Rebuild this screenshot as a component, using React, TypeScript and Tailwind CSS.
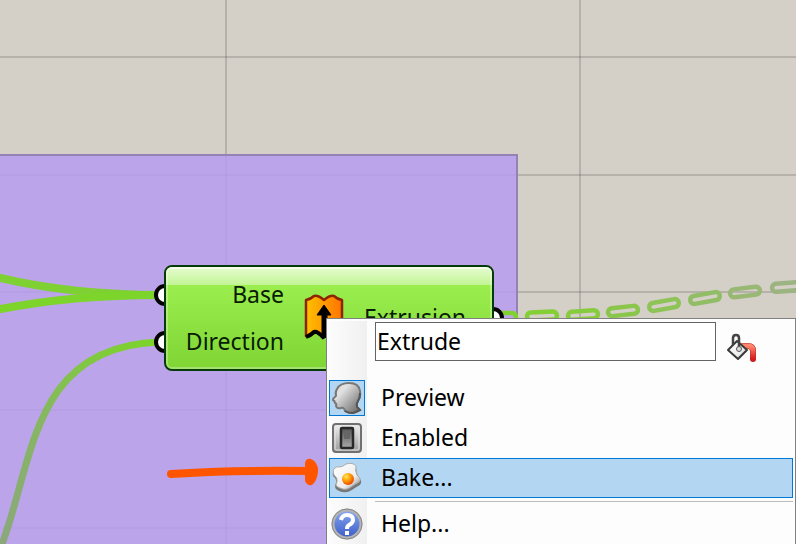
import type { ReactNode } from "react";

const links = [
  { x: 501, y: 317, angle: 0, color: "#80d22c" },
  { x: 542, y: 316, angle: -2, color: "#84cf35" },
  { x: 583, y: 315, angle: -4, color: "#87cc3f" },
  { x: 623, y: 311, angle: -6, color: "#8ac64a" },
  { x: 664, y: 305, angle: -10, color: "#8dc357" },
  { x: 705, y: 298, angle: -10, color: "#91be64" },
  { x: 745, y: 292, angle: -7, color: "#98b873" },
  { x: 787, y: 287, angle: -4, color: "#9cb482" },
];

function Grid() {
  return (
    <svg className="absolute inset-0 size-full" aria-hidden="true">
      <g fill="#000" fillOpacity="0.14">
        {[225, 579].map((x) => (
          <rect key={x} x={x} y="0" width="2" height="100%" />
        ))}
        {[56, 174, 291, 409, 527].map((y) => (
          <rect key={y} x="0" y={y} width="100%" height="2" />
        ))}
      </g>
    </svg>
  );
}

function Wires() {
  return (
    <svg className="absolute inset-0 size-full" fill="none" aria-hidden="true">
      <defs>
        <linearGradient id="wire" gradientUnits="userSpaceOnUse" x1="0" y1="544" x2="156" y2="342">
          <stop offset="0" stopColor="#8ba77d" />
          <stop offset="0.5" stopColor="#86b761" />
          <stop offset="1" stopColor="#7dd42a" />
        </linearGradient>
      </defs>
      <g strokeWidth="8">
        <path d="M-4 277C45 289 95 295 160 295" stroke="#7fd033" />
        <path d="M-4 310C45 300 95 295 160 295" stroke="#7dd42a" />
        <path d="M-1 552C34 467 28 346 160 342" stroke="url(#wire)" strokeWidth="7" />
      </g>
      {links.map((l) => (
        <rect
          key={l.x}
          x={l.x - 15}
          y={l.y - 4}
          width="30"
          height="8"
          rx="4"
          stroke={l.color}
          strokeWidth="4.5"
          transform={`rotate(${l.angle} ${l.x} ${l.y})`}
        />
      ))}
      <g fill="#fff" stroke="#000" strokeWidth="4">
        <circle cx="165" cy="295" r="9" />
        <circle cx="165" cy="342" r="9" />
        <circle cx="493" cy="318" r="9" />
      </g>
      <path d="M171 474Q225 470 311 471" stroke="#ff5500" strokeWidth="8" strokeLinecap="round" />
      <path d="M305 463Q306 458 311 459Q316 461 318 468L318 472Q317 481 312 485Q307 486 305 481Z" fill="#ff5500" />
    </svg>
  );
}

function ExtrudeIcon() {
  return (
    <svg className="h-12 w-10" viewBox="0 0 40 48" aria-hidden="true">
      <defs>
        <linearGradient id="ext">
          <stop stopColor="#ffc000" />
          <stop offset="0.5" stopColor="#ff9b00" />
          <stop offset="1" stopColor="#ff7300" />
        </linearGradient>
      </defs>
      <path d="M2 42V6Q7 5 10 2Q14 1 20 6Q26 1 30 2Q33 5 38 6V42L29 39 25 42 20 43 16 40 12 37 8 40Z" fill="url(#ext)" stroke="#8d2400" strokeWidth="2.5" strokeLinejoin="round" />
      <path d="M2 43Q7 41 10 38Q13 37 19 43L30 37 38 44" fill="none" stroke="#000" strokeWidth="4" />
      <path d="M20 11L13 21H18V43H23V21H27Z" fill="#000" stroke="#000" strokeLinejoin="round" />
    </svg>
  );
}

function Defs() {
  return (
    <svg className="absolute size-0" aria-hidden="true">
      <defs>
        <linearGradient id="metal" x1="0" y1="0" x2="1" y2="1">
          <stop stopColor="#d5d5d5" />
          <stop offset="0.3" stopColor="#e2e2e2" />
          <stop offset="0.6" stopColor="#aaa" />
          <stop offset="1" stopColor="#606060" />
        </linearGradient>
        <linearGradient id="switchFace" x1="0" y1="0" x2="0" y2="1">
          <stop stopColor="#f1f1f1" />
          <stop offset="1" stopColor="#999" />
        </linearGradient>
        <linearGradient id="dark" x1="0" y1="0" x2="0" y2="1">
          <stop stopColor="#555" />
          <stop offset="1" stopColor="#aaa" />
        </linearGradient>
        <linearGradient id="white" x1="0" y1="0" x2="1" y2="1">
          <stop stopColor="#fff" />
          <stop offset="0.65" stopColor="#eee" />
          <stop offset="1" stopColor="#888" />
        </linearGradient>
        <radialGradient id="yolk" cx="0.35" cy="0.3" r="0.7">
          <stop stopColor="#ffe95e" />
          <stop offset="0.45" stopColor="#ffa60c" />
          <stop offset="1" stopColor="#ed4e00" />
        </radialGradient>
        <linearGradient id="blue" x1="0" y1="0" x2="0" y2="1">
          <stop stopColor="#8eaaf1" />
          <stop offset="0.45" stopColor="#6485dc" />
          <stop offset="1" stopColor="#3c5cc8" />
        </linearGradient>
        <linearGradient id="paint" x1="0" y1="0" x2="0" y2="1">
          <stop stopColor="#ff876b" />
          <stop offset="1" stopColor="#d91818" />
        </linearGradient>
      </defs>
    </svg>
  );
}

const iconClass = "size-8";

const PreviewIcon = () => (
  <svg className={iconClass} viewBox="0 0 32 32" aria-hidden="true">
    <path d="M6 7Q9 1 18 1Q28 1 29 9Q30 15 27 19Q25 22 26 25L29 28Q25 30 22 31Q17 31 14 29Q13 25 10 26Q6 27 5 24Q6 22 4 21Q4 19 2 18Q2 16 5 14Q4 10 6 7Z" fill="url(#metal)" stroke="#777" strokeWidth="2" strokeLinejoin="round" />
    <path d="M29 11Q29 16 27 19Q25 22 26 25L29 28Q25 30 22 31Q17 31 14 29" fill="none" stroke="#555" strokeWidth="2" />
  </svg>
);

const EnabledIcon = () => (
  <svg className={iconClass} viewBox="0 0 32 32" aria-hidden="true">
    <rect x="2" y="2" width="28" height="28" rx="3" fill="url(#switchFace)" stroke="#707070" strokeWidth="2" />
    <rect x="4" y="4" width="24" height="24" rx="1" fill="none" stroke="#e5e5e5" />
    <rect x="10" y="6" width="12" height="20" rx="1" fill="url(#dark)" stroke="#282828" strokeWidth="2.5" />
    <path d="M13 9H19V17H13Z" fill="#666" />
  </svg>
);

const EggIcon = () => (
  <svg className={iconClass} viewBox="0 0 32 32" aria-hidden="true">
    <path d="M8 5Q12 5 15 2Q22 0 25 4Q25 9 27 13Q32 18 29 22Q25 24 21 27Q15 31 8 28Q2 25 5 20Q6 16 2 13Q1 8 4 6Q6 4 8 5Z" transform="translate(0 1)" fill="#777" />
    <path d="M8 5Q12 5 15 2Q22 0 25 4Q24 9 26 13Q31 17 28 20Q24 22 20 25Q15 29 9 26Q3 24 6 20Q7 16 3 13Q1 8 4 6Q6 4 8 5Z" fill="url(#white)" stroke="#aaa" />
    <circle cx="17" cy="17" r="6" fill="url(#yolk)" />
  </svg>
);

const HelpIcon = () => (
  <svg className={iconClass} viewBox="0 0 32 32" aria-hidden="true">
    <circle cx="16" cy="16" r="14" fill="url(#blue)" stroke="#b4b4b4" strokeWidth="3" />
    <circle cx="16" cy="16" r="15" fill="none" stroke="#888" />
    <path d="M10 12Q11 7 16 7Q22 7 22 12Q22 15 18 17Q16 18 16 21" fill="none" stroke="#fff" strokeWidth="4" />
    <rect x="14" y="23" width="4" height="4" fill="#fff" />
  </svg>
);

const BucketIcon = () => (
  <svg className="h-8 w-8" viewBox="0 0 32 32" aria-hidden="true">
    <path d="M18 14H23Q28 14 28 19V27" fill="none" stroke="#a33" strokeWidth="6" strokeLinecap="round" />
    <path d="M18 14H23Q28 14 28 19V27" fill="none" stroke="url(#paint)" strokeWidth="5" strokeLinecap="round" />
    <path d="M3 18L12 9 22 18 13 27Z" fill="url(#white)" stroke="#3a3a3a" strokeWidth="2" strokeLinejoin="round" />
    <path d="M8 13V6Q8 3 11 3Q14 3 14 6V15" fill="none" stroke="#444" strokeWidth="2.5" />
    <circle cx="14" cy="17" r="2.5" fill="#ddd" stroke="#555" />
  </svg>
);

function MenuItem({ icon, label, checked, active }: { icon: ReactNode; label: string; checked?: boolean; active?: boolean }) {
  return (
    <button
      type="button"
      className={`flex h-10 w-full items-center border text-left ${active ? "border-[#0078d7] bg-[#b3d7f3]" : "border-transparent"}`}
    >
      <span className={`-my-px -ml-px flex h-9 w-9 shrink-0 items-center justify-center border ${checked ? "border-[#0078d7] bg-[#b3d7f3]" : "border-transparent"}`}>
        {icon}
      </span>
      <span className="pb-0.5 pl-4">{label}</span>
    </button>
  );
}

export default function App() {
  return (
    <main className="relative h-screen overflow-hidden bg-[#d4cfc7] font-['Noto_Sans',sans-serif] text-[23px] leading-8 text-black">
      <Defs />
      <Grid />
      <section className="absolute top-[154px] -bottom-1 -left-1 w-[522px] border-2 border-[#9481b6] bg-[#b79cf0]/85" />
      <Wires />

      <section className="absolute top-[265px] left-[164px] flex h-[106px] w-[330px] items-center rounded-lg border-2 border-[#053b05] bg-linear-to-b from-[#a0f352] to-[#7fd533] text-[#071c04]">
        <div className="absolute inset-0 rounded-md border-2 border-white/30" />
        <div className="absolute inset-x-0 top-0 h-[18px] rounded-t-md border-t-2 border-white/70 bg-linear-to-b from-white/70 to-white/40" />
        <div className="relative flex w-[118px] flex-col gap-[15px] pb-0.5 text-right">
          <span>Base</span>
          <span>Direction</span>
        </div>
        <div className="relative ml-5">
          <ExtrudeIcon />
        </div>
        <span className="relative ml-5 pb-0.5">Extrusion</span>
      </section>

      <div className="absolute top-[318px] right-0 left-[326px] h-[260px] border border-[#808080] bg-[#fdfdfd] p-0.5">
        <div className="absolute inset-y-0.5 left-0.5 w-[38px] bg-linear-to-r from-[#fcfcfc] to-[#f0f0f0]" />
        <div className="relative">
          <div className="flex h-[57px] items-start pt-px pr-9 pl-[46px]">
            <input
              aria-label="Component name"
              defaultValue="Extrude"
              className="h-[39px] min-w-0 grow border border-[#646464] bg-white px-px pb-0.5 outline-none"
            />
            <button type="button" aria-label="Color" className="mt-2.5 ml-[9px] shrink-0">
              <BucketIcon />
            </button>
          </div>
          <MenuItem icon={<PreviewIcon />} label="Preview" checked />
          <MenuItem icon={<EnabledIcon />} label="Enabled" />
          <MenuItem icon={<EggIcon />} label="Bake..." active />
          <hr className="mt-[3px] mb-0.5 ml-[46px] border-[#bdbdbd]" />
          <MenuItem icon={<HelpIcon />} label="Help..." />
        </div>
      </div>
    </main>
  );
}
